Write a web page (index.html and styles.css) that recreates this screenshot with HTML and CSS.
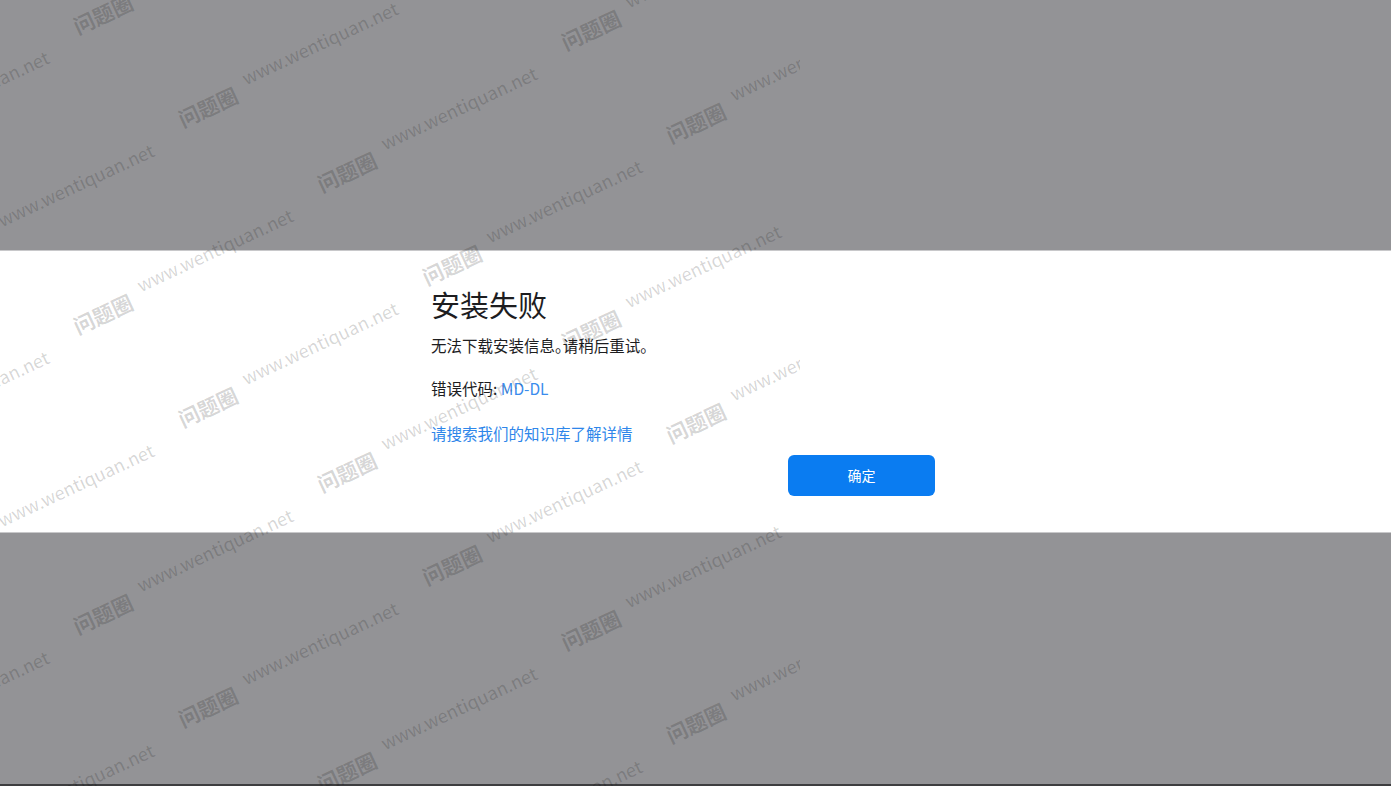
FILE: index.html
```html
<!DOCTYPE html>
<html lang="zh-CN">
<head>
    <meta charset="UTF-8">
    <meta name="viewport" content="width=device-width, initial-scale=1.0">
    <title>安装失败</title>
    <link rel="stylesheet" href="styles.css">
</head>
<body>
    <div class="page">
        <div class="band">
            <div class="dialog">
                <h1 class="title">安装失败</h1>
                <p class="msg">无法下载安装信息。请稍后重试。</p>
                <p class="code">错误代码: <span class="code-id">MD-DL</span></p>
                <a class="link" href="#">请搜索我们的知识库了解详情</a>
                <div class="actions">
                    <button class="btn">确定</button>
                </div>
            </div>
        </div>
    </div>

    <!-- 水印 -->
    <svg class="watermark" width="800" height="786" viewBox="0 0 800 786">
        <defs>
            <g id="wm">
                <text class="wm-cn" x="0" y="0">问题圈</text>
                <text class="wm-url" x="75" y="-12">www.wentiquan.net</text>
            </g>
        </defs>
        <use href="#wm" transform="translate(-61 270) rotate(-25)"/>
        <use href="#wm" transform="translate(-61 570) rotate(-25)"/>
        <use href="#wm" transform="translate(-61 870) rotate(-25)"/>
        <use href="#wm" transform="translate(-166 177) rotate(-25)"/>
        <use href="#wm" transform="translate(-166 477) rotate(-25)"/>
        <use href="#wm" transform="translate(-166 777) rotate(-25)"/>

        <use href="#wm" transform="translate(183 128) rotate(-25)"/>
        <use href="#wm" transform="translate(183 428) rotate(-25)"/>
        <use href="#wm" transform="translate(183 728) rotate(-25)"/>
        <use href="#wm" transform="translate(78 35) rotate(-25)"/>
        <use href="#wm" transform="translate(78 335) rotate(-25)"/>
        <use href="#wm" transform="translate(78 635) rotate(-25)"/>

        <use href="#wm" transform="translate(427 286) rotate(-25)"/>
        <use href="#wm" transform="translate(427 586) rotate(-25)"/>
        <use href="#wm" transform="translate(427 886) rotate(-25)"/>
        <use href="#wm" transform="translate(322 193) rotate(-25)"/>
        <use href="#wm" transform="translate(322 493) rotate(-25)"/>
        <use href="#wm" transform="translate(322 793) rotate(-25)"/>

        <use href="#wm" transform="translate(671 144) rotate(-25)"/>
        <use href="#wm" transform="translate(671 444) rotate(-25)"/>
        <use href="#wm" transform="translate(671 744) rotate(-25)"/>
        <use href="#wm" transform="translate(566 51) rotate(-25)"/>
        <use href="#wm" transform="translate(566 351) rotate(-25)"/>
        <use href="#wm" transform="translate(566 651) rotate(-25)"/>
    </svg>
</body>
</html>
```

FILE: styles.css
```css
html, body {
    margin: 0;
    padding: 0;
}
body {
    position: relative;
    background-color: #939396;
    font-family: "Noto Sans CJK SC", "Noto Sans", sans-serif;
    overflow: hidden;
}
.page {
    height: 786px;
    padding-top: 250px;
    box-sizing: border-box;
    border-bottom: 2px solid #3d3d3f;
}
.band {
    background-color: #fff;
    border-top: 1px solid #c8c8ca;
    border-bottom: 1px solid #c8c8ca;
    padding: 35px 0 36px;
}
.dialog {
    width: 504px;
    margin-left: 431px;
}
.title {
    margin: 0;
    font-size: 29px;
    line-height: 36px;
    font-weight: 400;
    color: #1d1d1f;
}
.msg,
.code {
    margin: 0;
    font-size: 15.5px;
    line-height: 22px;
    color: #1d1d1f;
    font-feature-settings: "halt";
}
.msg {
    margin-top: 12px;
}
.code {
    margin-top: 21px;
}
.code-id {
    color: #3a8ced;
}
.link {
    display: block;
    margin-top: 23px;
    font-size: 15.5px;
    line-height: 22px;
    color: #2e86ea;
    text-decoration: none;
}
.actions {
    display: flex;
    justify-content: flex-end;
    margin-top: 11px;
}
.btn {
    width: 147px;
    height: 41px;
    border: none;
    border-radius: 6px;
    background-color: #0a7cf1;
    color: #fff;
    font-family: inherit;
    font-size: 14px;
    line-height: 39px;
    cursor: pointer;
}
.watermark {
    position: absolute;
    top: 0;
    left: 0;
    pointer-events: none;
}
.wm-cn {
    font-family: "Noto Sans CJK SC", sans-serif;
    font-size: 21px;
    font-weight: 700;
    fill: rgba(0, 0, 0, 0.17);
}
.wm-url {
    font-family: "Noto Sans CJK SC", sans-serif;
    font-size: 18px;
    font-weight: 400;
    fill: rgba(0, 0, 0, 0.17);
}
```
